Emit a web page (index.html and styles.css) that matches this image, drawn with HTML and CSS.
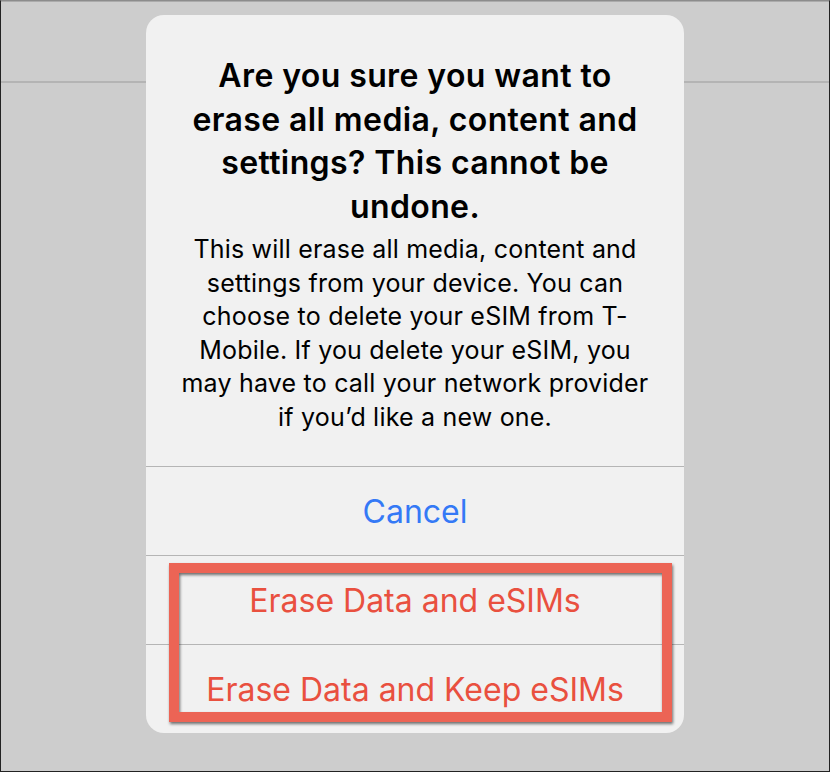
FILE: index.html
```html
<!DOCTYPE html>
<html lang="en">
<head>
    <meta charset="UTF-8">
    <meta name="viewport" content="width=device-width, initial-scale=1.0">
    <title>Erase iPhone</title>
    <link rel="stylesheet" href="styles.css">
</head>
<body>
    <div class="screen">
        <!-- 뒤쪽 화면 (내비게이션 바) -->
        <div class="nav-bar"></div>

        <!-- 경고 대화상자 -->
        <div class="alert">
            <div class="alert-body">
                <h2 class="alert-title">Are you sure you want to<br>erase all media, content and<br>settings? This cannot be<br>undone.</h2>
                <p class="alert-message">This will erase all media, content and<br>settings from your device. You can<br>choose to delete your eSIM from T-<br>Mobile. If you delete your eSIM, you<br>may have to call your network provider<br>if you’d like a new one.</p>
            </div>
            <button class="alert-btn cancel-btn">Cancel</button>
            <button class="alert-btn danger-btn">Erase Data and eSIMs</button>
            <button class="alert-btn danger-btn">Erase Data and Keep eSIMs</button>

            <!-- 강조 표시 -->
            <div class="highlight"></div>
        </div>
    </div>
</body>
</html>
```

FILE: styles.css
```css
* {
    box-sizing: border-box;
}

body {
    margin: 0;
    font-family: Inter, "Noto Sans", sans-serif;
}

.screen {
    position: relative;
    width: 830px;
    height: 772px;
    background-color: #cdcdcd;
    border: 1px solid #222;
    border-top-color: #8c8c8c;
    box-shadow: inset 0 1px 0 #ababab;
    overflow: hidden;
}

.nav-bar {
    height: 82px;
    border-bottom: 2px solid #b4b4b4;
}

/* 대화상자 */
.alert {
    position: absolute;
    left: 145px;
    top: 14px;
    width: 538px;
    height: 718px;
    background-color: #f1f1f1;
    border-radius: 18px;
    display: flex;
    flex-direction: column;
}

.alert-body {
    padding: 39px 10px 0;
    height: 452px;
    border-bottom: 1px solid #b5b5b5;
    text-align: center;
    color: #000;
}

.alert-title {
    margin: 0;
    font-size: 32px;
    font-weight: 600;
    line-height: 43.5px;
    letter-spacing: 0.4px;
}

.alert-message {
    margin: 5px 0 0;
    font-size: 25px;
    font-weight: 400;
    line-height: 33.6px;
    letter-spacing: 0.2px;
}

.alert-btn {
    display: block;
    width: 100%;
    height: 89px;
    padding: 0;
    border: none;
    border-bottom: 1px solid #b5b5b5;
    background: none;
    font-family: inherit;
    font-size: 32px;
    cursor: pointer;
}

.alert-btn:last-of-type {
    border-bottom: none;
    height: 88px;
}

.cancel-btn {
    color: #3479f6;
}

.danger-btn {
    color: #e9503f;
}

.highlight {
    position: absolute;
    left: 23px;
    top: 548px;
    width: 503px;
    height: 159px;
    border: 10px solid #ec6455;
    filter: drop-shadow(1px 2px 1.5px rgba(0, 0, 0, 0.55));
}
```
